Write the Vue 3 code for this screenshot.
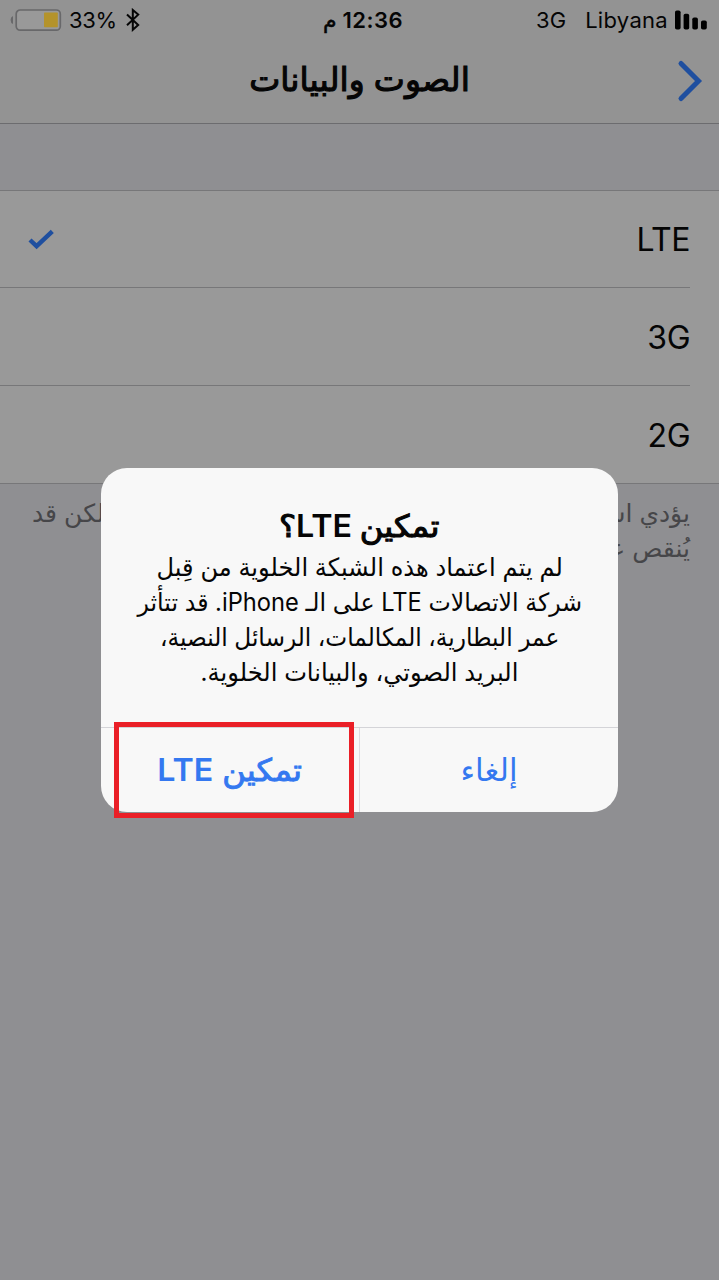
<script setup>
const networks = [
  { name: 'LTE', selected: true },
  { name: '3G', selected: false },
  { name: '2G', selected: false },
]
</script>

<template>
  <div class="screen" dir="rtl">
    <header class="status">
      <div class="carrier">
        <svg class="bars" width="34" height="20" viewBox="0 0 34 20">
          <rect x="1" y="0.5" width="5.6" height="19" rx="1.8" />
          <rect x="9.6" y="3.7" width="5.6" height="15.8" rx="1.8" />
          <rect x="18.3" y="7.5" width="5.6" height="12" rx="1.8" />
          <rect x="27" y="10.5" width="5.8" height="9" rx="1.8" />
        </svg>
        <span class="operator">Libyana</span>
        <span class="radio">3G</span>
      </div>
      <div class="time"><span>12:36</span><span class="meridiem">م</span></div>
      <div class="power">
        <svg class="bluetooth" width="16" height="24" viewBox="0 0 16 24">
          <path d="M2 6.4 L13.2 17 L7.8 21.8 V2 L13.2 6.6 L2 17.3" />
        </svg>
        <span class="percent">33%</span>
        <svg class="battery" width="52" height="24" viewBox="0 0 52 24">
          <path class="tip" d="M3 8 Q0.6 9 0.6 12 Q0.6 15 3 16 Z" />
          <rect class="shell" x="6.2" y="2" width="44.1" height="20.2" rx="4" />
          <rect class="level" x="34" y="4.5" width="13.8" height="14.8" rx="0.8" />
        </svg>
      </div>
    </header>

    <nav class="nav">
      <h1><span class="nav-title">الصوت والبيانات</span></h1>
      <svg class="back" width="28" height="44" viewBox="0 0 28 44">
        <path d="M5 4.5 L22.5 22 L5 39.5" />
      </svg>
    </nav>

    <ul class="list">
      <li v-for="network in networks" :key="network.name">
        <div class="row">
          <span>{{ network.name }}</span>
          <svg v-if="network.selected" class="check" width="28" height="22" viewBox="0 0 28 22">
            <path d="M3 12 L9.6 18.2 L25.3 3.3" />
          </svg>
        </div>
      </li>
    </ul>

    <div class="footnote">
      <div class="foot-line"><span>يؤدي استخدام LTE</span><span>ولكن قد</span></div>
      <div class="foot-line"><span>يُنقص عمر البطارية.</span></div>
    </div>

    <section class="dialog">
      <div class="message">
        <h2><span class="line title-line"><i>تمكين</i> <b>LTE</b><i>؟</i></span></h2>
        <p><span class="line l1">لم يتم اعتماد هذه الشبكة الخلوية من قِبل</span></p>
        <p><span class="line l2">شركة الاتصالات LTE على الـ iPhone. قد تتأثر</span></p>
        <p><span class="line l3">عمر البطارية، المكالمات، الرسائل النصية،</span></p>
        <p><span class="line l4">البريد الصوتي، والبيانات الخلوية.</span></p>
      </div>
      <div class="actions">
        <button class="cancel"><span class="line">إلغاء</span></button>
        <button class="enable"><span class="line"><i>تمكين</i> <b>LTE</b></span></button>
      </div>
      <div class="highlight"></div>
    </section>
  </div>
</template>

<style>
body {
  margin: 0;
}
</style>

<style scoped>
.screen {
  position: relative;
  width: 719px;
  height: 1280px;
  overflow: hidden;
  background: #8f8f92;
  color: #050505;
  font-family: Inter, "DejaVu Sans", sans-serif;
}
.status {
  display: grid;
  grid-template-columns: 1fr auto 1fr;
  align-items: center;
  height: 40px;
  padding: 0 11px 0 10px;
  box-sizing: border-box;
  background: #939393;
  font-size: 22px;
  line-height: 40px;
}
.carrier,
.power {
  display: flex;
  align-items: center;
}
.power {
  justify-content: flex-end;
}
.operator {
  margin-right: 6px;
  letter-spacing: 0.3px;
}
.radio {
  margin-right: 19px;
}
.percent {
  margin: 0 9px 0 7px;
  letter-spacing: -0.4px;
}
.time {
  display: flex;
  gap: 6px;
  font-weight: 600;
  letter-spacing: 0.5px;
  transform: translateX(4px);
}
.meridiem {
  font-weight: 400;
  -webkit-text-stroke: 0.5px;
}
.bluetooth path {
  fill: none;
  stroke: #050505;
  stroke-width: 2;
}
.bluetooth {
  margin-left: -1px;
}
.shell {
  fill: #999;
  stroke: #68686a;
  stroke-width: 1.7;
}
.tip {
  fill: #68686a;
}
.level {
  fill: #b4932b;
}
.nav {
  position: relative;
  height: 84px;
  box-sizing: border-box;
  background: #939393;
  border-bottom: 1px solid #6c6c6f;
}
.nav h1 {
  margin: 0;
  text-align: center;
  font-size: 33px;
  line-height: 78px;
  font-weight: 400;
}
.nav-title {
  display: inline-block;
  -webkit-text-stroke: 1.1px;
}
.back {
  position: absolute;
  left: 676px;
  top: 19px;
}
.back path {
  fill: none;
  stroke: #1f4f9f;
  stroke-width: 5;
  stroke-linecap: round;
}
.list {
  margin: 66px 0 0;
  padding: 0;
  list-style: none;
  background: #999;
  border-top: 1px solid #777779;
  border-bottom: 1px solid #777779;
}
.row {
  display: flex;
  align-items: center;
  justify-content: space-between;
  height: 96px;
  box-sizing: border-box;
  margin-right: 29px;
  padding-left: 27px;
  font-size: 32px;
}
li + li .row {
  height: 98px;
  padding-top: 1px;
  border-top: 1px solid #777779;
}
.row span {
  letter-spacing: -0.5px;
}
.check path {
  fill: none;
  stroke: #1f4f9f;
  stroke-width: 4.4;
}
.footnote {
  padding: 12px 29px 0 32px;
  color: #464649;
  font-size: 25px;
  line-height: 35px;
}
.foot-line {
  display: flex;
  justify-content: space-between;
  white-space: nowrap;
}
.dialog {
  position: absolute;
  left: 101px;
  top: 468px;
  width: 517px;
  height: 344px;
  border-radius: 26px;
  background: #f8f8f8;
}
.message {
  height: 259px;
  padding-top: 38px;
  box-sizing: border-box;
  text-align: center;
}
.line {
  display: inline-block;
  white-space: nowrap;
}
.line i {
  font-style: normal;
  font-weight: 400;
  -webkit-text-stroke: 1.1px;
}
.line b {
  font-weight: 600;
}
.message h2 {
  display: flex;
  justify-content: center;
  margin: 0;
  font-size: 31px;
  line-height: 40px;
  height: 44px;
}
.title-line,
.enable .line {
  transform: scaleX(1.04);
}
.message p {
  display: flex;
  justify-content: center;
  margin: 0;
  height: 35px;
  font-size: 25px;
  line-height: 35px;
}
.l1 {
  transform: scaleX(0.964);
}
.l2 {
  transform: scaleX(0.947);
}
.l3 {
  transform: scaleX(0.93);
}
.l4 {
  transform: scaleX(0.966);
}
.actions {
  display: flex;
  height: 85px;
  box-sizing: border-box;
  border-top: 1px solid #d4d4d8;
}
.actions button {
  flex: 1;
  padding: 0 0 2px;
  border: 0;
  background: none;
  color: #3478f0;
  font-family: inherit;
  font-size: 31px;
}
.actions .cancel {
  border-left: 1px solid #dcdce0;
}
.enable .line i {
  -webkit-text-stroke: 0.9px;
}
.highlight {
  position: absolute;
  left: 13px;
  top: 254px;
  width: 240px;
  height: 96px;
  box-sizing: border-box;
  border: 5px solid #ea1f27;
}
</style>
